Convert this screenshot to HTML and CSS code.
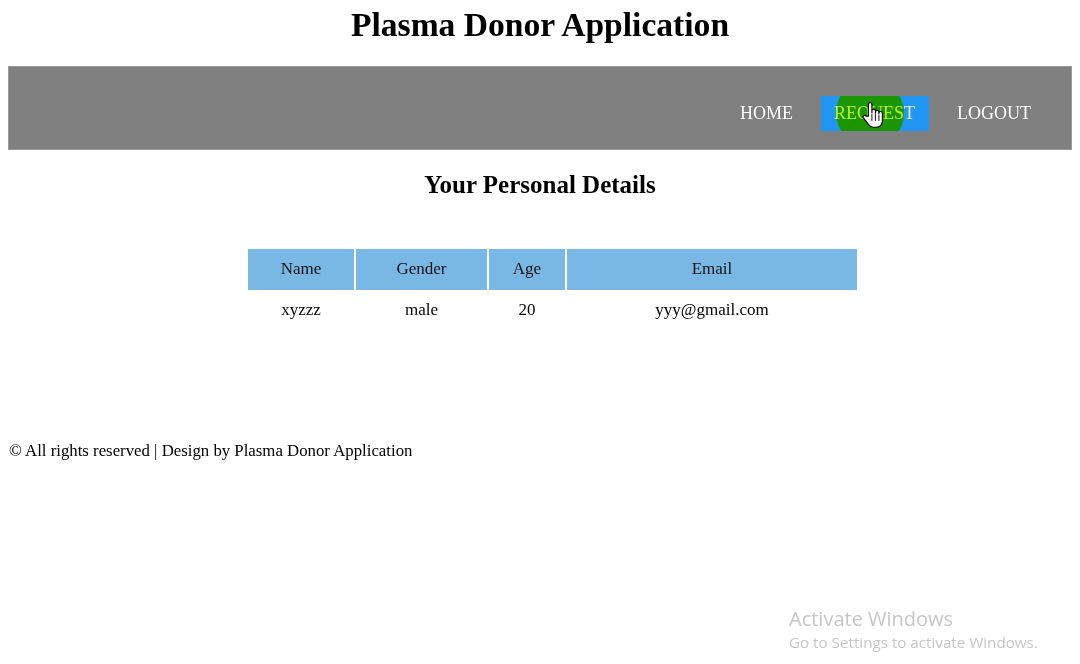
FILE: index.html
```html
<!DOCTYPE html>
<html>
<head>
<meta charset="utf-8">
<title>Plasma Donor Application</title>
<link rel="stylesheet" href="styles.css">
</head>
<body>
<h1 class="title">Plasma Donor Application</h1>
<nav class="navbar">
  <a class="nav-link" href="#">HOME</a>
  <a class="nav-link active" href="#"><span class="click-ring"></span><span class="nav-text">REQUEST</span></a>
  <a class="nav-link" href="#">LOGOUT</a>
</nav>
<h2 class="subtitle">Your Personal Details</h2>
<table class="details">
  <thead>
    <tr><th class="c-name">Name</th><th class="c-gender">Gender</th><th class="c-age">Age</th><th class="c-email">Email</th></tr>
  </thead>
  <tbody>
    <tr><td>xyzzz</td><td>male</td><td>20</td><td>yyy@gmail.com</td></tr>
  </tbody>
</table>
<p class="footer">© All rights reserved | Design by Plasma Donor Application</p>

<svg class="cursor" width="21" height="28" viewBox="0 0 18 24" aria-hidden="true">
  <path d="M5.5 13 V3 a1.5 1.5 0 0 1 3 0 V10 V8.5 a1.5 1.5 0 0 1 3 0 V10.5 V9.5 a1.5 1.5 0 0 1 3 0 V11 V10.5 a1.5 1.5 0 0 1 3 0 V17 c0 3 -2 5.5 -5 5.5 H9.5 c-2 0 -3 -1 -4 -2.5 L1.2 14.5 a1.4 1.4 0 0 1 2.3 -1.6 Z" fill="#fff" stroke="#000" stroke-width="1" stroke-linejoin="round"/>
  <path d="M8.5 11 V17 M11.5 11 V17 M14.5 12 V17" stroke="#000" stroke-width="0.8" fill="none"/>
</svg>

<div class="watermark">
  <div class="wm-title">Activate Windows</div>
  <div class="wm-sub">Go to Settings to activate Windows.</div>
</div>
</body>
</html>
```

FILE: styles.css
```css
html, body {
  background: #ffffff;
}
body {
  margin: 0 8px;
  font-family: "Liberation Serif", "Times New Roman", serif;
  color: #000;
  position: relative;
  min-height: 664px;
}
.title {
  margin: 6px 0 0;
  font-size: 33.6px;
  font-weight: bold;
  text-align: center;
  line-height: normal;
  height: 60px;
}
.navbar {
  background: #808080;
  height: 84px;
  box-sizing: border-box;
  border: 1px solid #9a9a9a;
  display: flex;
  justify-content: flex-end;
  align-items: flex-start;
  gap: 14px;
  padding: 29px 26px 0 0;
}
.nav-link {
  display: block;
  position: relative;
  overflow: hidden;
  color: #ffffff;
  text-decoration: none;
  font-size: 18px;
  line-height: 19px;
  padding: 8px 14px;
}
.nav-link.active {
  background: #2196f3;
  color: #e8f4ff;
  padding: 8px 14px 8px 13px;
}
.nav-text {
  position: relative;
}
.click-ring {
  position: absolute;
  left: 15px;
  top: -17px;
  width: 68px;
  height: 68px;
  border-radius: 50%;
  background: #ccff00;
  mix-blend-mode: multiply;
  z-index: 2;
}
.subtitle {
  margin: 21px 0 0;
  font-size: 25px;
  font-weight: bold;
  text-align: center;
  line-height: normal;
}
.details {
  margin: 48px 0 0 238px;
  border-spacing: 2px;
  font-size: 17px;
  text-align: center;
}
.details th {
  background: #79b8e5;
  font-weight: normal;
  line-height: 20px;
  padding: 10px 0 11px;
  color: #111;
}
.details td {
  line-height: 20px;
  padding: 8px 0 6px;
}
.c-name { width: 106px; }
.c-gender { width: 131px; }
.c-age { width: 76px; }
.c-email { width: 290px; }
.footer {
  margin: 113px 0 0 1px;
  font-size: 16.8px;
  line-height: 20px;
}
.cursor {
  position: absolute;
  left: 854px;
  top: 101px;
  z-index: 5;
}
.watermark {
  position: absolute;
  left: 781px;
  top: 605px;
  font-family: "Open Sans", "Noto Sans", sans-serif;
  color: #c6c6c6;
}
.wm-title {
  font-size: 20px;
  line-height: 27px;
}
.wm-sub {
  font-size: 15.2px;
  line-height: 21px;
}
```
